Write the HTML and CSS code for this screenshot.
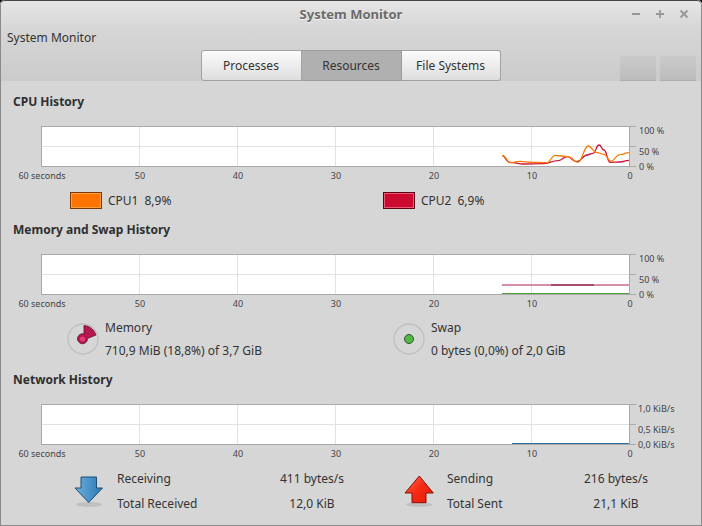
FILE: index.html
```html
<!DOCTYPE html>
<html lang="en">
<head>
<meta charset="utf-8">
<title>System Monitor</title>
<link rel="stylesheet" href="styles.css">
</head>
<body>
<div class="window">
  <header class="chrome">
    <div class="titlebar">
      <span class="wintitle">System Monitor</span>
      <div class="winbtns">
        <svg class="winbtn" viewBox="0 0 10 10"><path d="M1 5h8"/></svg>
        <svg class="winbtn" viewBox="0 0 10 10"><path d="M1 5h8M5 1v8"/></svg>
        <svg class="winbtn" viewBox="0 0 10 10"><path d="M1.5 1.5l7 7M8.5 1.5l-7 7"/></svg>
      </div>
    </div>
    <div class="apptitle">System Monitor</div>
    <div class="toolbar">
      <nav class="tabs">
        <span class="tab tab-first">Processes</span>
        <span class="tab tab-active">Resources</span>
        <span class="tab tab-last">File Systems</span>
      </nav>
      <div class="ghosts"><span class="ghost"></span><span class="ghost"></span></div>
    </div>
  </header>

  <main class="content">
    <h2 class="section-title">CPU History</h2>
    <svg class="chart" viewBox="0 122 702 62" width="702" height="62">
      <rect class="plot" x="41.5" y="126.5" width="588" height="40"/>
      <path class="grid" d="M42 146.5H629M139.5 127V166M237.5 127V166M335.5 127V166M433.5 127V166M531.5 127V166"/>
      <path class="tick" d="M630 126.5h6M630 146.5h6M630 166.5h6"/>
      <path class="line cpu2" d="M502 155.3C505 155.3 506 162.3 510 162.3C515 162.3 518 164 523 164C530 164 535 163.7 543 163.7C549 163.7 552 160.7 558 160.7C562 160.7 563 156.7 567 156.7C571 156.7 573 161.7 577 161.7C581 161.7 583 155 587 155C590 155 590 153.3 593 153.3C596 153.3 596 145 599 145C602 145 601 150 604 150C607 150 607 162.3 610 162.3C614 162.3 616 162 620 162C624 162 625 160.3 629 160.3"/>
      <path class="line cpu1" d="M502 155.3C503 155.3 504 156 505 157C507 159 508 162.7 510 162.7C513 162.7 516 161.3 520 161.3C525 161.3 528 162.3 533 162.3C538 162.3 542 162.7 547 162.7C550 162.7 552 155.3 555 155.3C560 155.3 563 156.7 568 156.7C572 156.7 574 162.3 578 162.3C582 162.3 584 146 588 146C592 146 593 152.7 597 152.7C600 152.7 601 154.3 604 154.3C607 154.3 608 161.3 611 161.3C614 161.3 616 154.7 620 154.7C624 154.7 625 152.7 629 152.7"/>
      <text class="ylab" x="639" y="134">100 %</text>
      <text class="ylab" x="639" y="154.500">50 %</text>
      <text class="ylab" x="639" y="170">0 %</text>
      <text class="xlab" x="42" y="179">60 seconds</text>
      <text class="xlab" x="140" y="179">50</text>
      <text class="xlab" x="238" y="179">40</text>
      <text class="xlab" x="336" y="179">30</text>
      <text class="xlab" x="434" y="179">20</text>
      <text class="xlab" x="532" y="179">10</text>
      <text class="xlab" x="630" y="179">0</text>
    </svg>
    <div class="cpu-legend">
      <div class="cpu-item"><span class="swatch swatch-orange"></span><span>CPU1</span><span>8,9%</span></div>
      <div class="cpu-item"><span class="swatch swatch-red"></span><span>CPU2</span><span>6,9%</span></div>
    </div>

    <h2 class="section-title">Memory and Swap History</h2>
    <svg class="chart" viewBox="0 250 702 62" width="702" height="62">
      <rect class="plot" x="41.5" y="254.5" width="588" height="40"/>
      <path class="grid" d="M42 274.500H629M139.5 255V294M237.5 255V294M335.5 255V294M433.5 255V294M531.5 255V294"/>
      <path class="tick" d="M630 254.5h6M630 274.500h6M630 294.5h6"/>
      <path class="line1 mem-light" d="M502 285H551M594 285H629"/>
      <path class="line1 mem-dark" d="M551 285H594"/>
      <path class="line1 swap" d="M502 293.500H629"/>
      <text class="ylab" x="639" y="262">100 %</text>
      <text class="ylab" x="639" y="282.500">50 %</text>
      <text class="ylab" x="639" y="298">0 %</text>
      <text class="xlab" x="42" y="307">60 seconds</text>
      <text class="xlab" x="140" y="307">50</text>
      <text class="xlab" x="238" y="307">40</text>
      <text class="xlab" x="336" y="307">30</text>
      <text class="xlab" x="434" y="307">20</text>
      <text class="xlab" x="532" y="307">10</text>
      <text class="xlab" x="630" y="307">0</text>
    </svg>
    <div class="mem-legend">
      <div class="mem-item">
        <svg class="dial" viewBox="0 0 32 32">
          <circle class="ring" cx="16" cy="16" r="15"/>
          <path class="wedge" d="M17 2.500A13.500 13.500 0 0 1 29 12L20.500 15.500A5 5 0 1 1 17 11Z"/>
          <circle class="hub" cx="15.500" cy="16" r="2.500"/>
        </svg>
        <div class="mem-text"><span>Memory</span><span>710,9 MiB (18,8%) of 3,7 GiB</span></div>
      </div>
      <div class="mem-item">
        <svg class="dial" viewBox="0 0 32 32">
          <circle class="ring" cx="16" cy="16" r="15"/>
          <circle class="dot" cx="16" cy="16" r="4.500"/>
        </svg>
        <div class="mem-text"><span>Swap</span><span>0 bytes (0,0%) of 2,0 GiB</span></div>
      </div>
    </div>

    <h2 class="section-title">Network History</h2>
    <svg class="chart" viewBox="0 400 702 62" width="702" height="62">
      <rect class="plot" x="41.5" y="404.5" width="588" height="40"/>
      <path class="grid" d="M42 424.500H629M139.5 405V444M237.5 405V444M335.5 405V444M433.5 405V444M531.5 405V444"/>
      <path class="tick" d="M630 404.5h6M630 424.500h6M630 444.5h6"/>
      <path class="line1 net" d="M512 443.500H629"/>
      <text class="ylab" x="638" y="412">1,0 KiB/s</text>
      <text class="ylab" x="638" y="432.500">0,5 KiB/s</text>
      <text class="ylab" x="638" y="448">0,0 KiB/s</text>
      <text class="xlab" x="42" y="457">60 seconds</text>
      <text class="xlab" x="140" y="457">50</text>
      <text class="xlab" x="238" y="457">40</text>
      <text class="xlab" x="336" y="457">30</text>
      <text class="xlab" x="434" y="457">20</text>
      <text class="xlab" x="532" y="457">10</text>
      <text class="xlab" x="630" y="457">0</text>
    </svg>
    <div class="net-legend">
      <div class="net-item">
        <svg class="arrow" viewBox="74 474 32 34">
          <defs>
            <linearGradient id="blue" x1="0" y1="0" x2="1" y2="0"><stop offset="0" stop-color="#6fb0dc"/><stop offset="1" stop-color="#2a78b4"/></linearGradient>
            <linearGradient id="redg" x1="0" y1="0" x2="1" y2="1"><stop offset="0" stop-color="#ff6a50"/><stop offset=".5" stop-color="#f42a12"/><stop offset="1" stop-color="#e81a06"/></linearGradient>
          </defs>
          <ellipse class="shadow" cx="89" cy="504.500" rx="13" ry="2.500"/>
          <path class="arrow-down" d="M81 477H96.500V488H102.500L88.700 502.500L75 488H81Z"/>
        </svg>
        <div class="net-grid net-grid-in">
          <span>Receiving</span><span class="net-val">411 bytes/s</span>
          <span>Total Received</span><span class="net-val">12,0 KiB</span>
        </div>
      </div>
      <div class="net-item">
        <svg class="arrow" viewBox="404 474 32 34">
          <ellipse class="shadow" cx="419" cy="504.500" rx="13" ry="2.500"/>
          <path class="arrow-up" d="M419.300 476L433.300 493H426V502.700H412V493H405Z"/>
        </svg>
        <div class="net-grid net-grid-out">
          <span>Sending</span><span class="net-val">216 bytes/s</span>
          <span>Total Sent</span><span class="net-val">21,1 KiB</span>
        </div>
      </div>
    </div>
  </main>
</div>
</body>
</html>
```
FILE: styles.css
```css
html, body { margin: 0; padding: 0; background: #111; }
body { width: 702px; height: 526px; overflow: hidden; font-family: "Noto Sans", sans-serif; font-size: 12px; color: #333; }
.window { position: relative; width: 702px; height: 526px; background: #d6d6d6; border-radius: 5px 5px 0 0; overflow: hidden; display: flex; flex-direction: column; }
.window::after { content: ""; position: absolute; inset: 0; border: 1px solid #8a8a8a; border-top-color: #444; border-radius: 5px 5px 0 0; pointer-events: none; }

.chrome { height: 81px; flex: none; background: linear-gradient(#e6e6e6, #d6d6d6 35%, #cbcbcb); display: flex; flex-direction: column; }
.titlebar { height: 28px; flex: none; display: flex; align-items: center; justify-content: center; position: relative; }
.wintitle { font-size: 13px; font-weight: 700; color: #6a6a6a; text-shadow: 0 1px 0 #f4f4f4; }
.winbtns { position: absolute; right: 13px; top: 9px; display: flex; gap: 14px; }
.winbtn { width: 10px; height: 10px; fill: none; stroke: #979797; stroke-width: 1.800; }
.apptitle { height: 18px; line-height: 18px; padding-left: 7px; flex: none; margin: 1px 0 3px; color: #333; }
.toolbar { position: relative; display: flex; justify-content: center; height: 31px; }
.tabs { display: flex; margin-right: 1px; }
.tab { display: flex; align-items: center; justify-content: center; width: 100px; height: 31px; box-sizing: border-box; border: 1px solid #a2a2a2; border-left-width: 0; background: linear-gradient(#fbfbfb, #dedede); color: #333; }
.tab-first { width: 101px; border-left-width: 1px; border-radius: 3px 0 0 3px; }
.tab-active { background: #b0b0b0; border-color: #9c9c9c; }
.tab-last { width: 99px; border-radius: 0 3px 3px 0; }
.ghosts { position: absolute; right: 6px; bottom: 0; display: flex; gap: 4px; }
.ghost { width: 36px; height: 25px; background: linear-gradient(#cacaca, #bcbcbc); border-bottom: 1px solid #aeaeae; box-sizing: border-box; }

.content { flex: 1; display: flex; flex-direction: column; }
.section-title { margin: 13px 0 12px; padding-left: 13px; font-size: 12px; line-height: 16px; font-weight: 700; color: #2f2f2f; }
.chart { display: block; flex: none; }
.plot { fill: #fff; stroke: #a9a9a9; }
.grid { fill: none; stroke: #e2e2e2; }
.tick { fill: none; stroke: #a9a9a9; }
.line { fill: none; stroke-width: 1.300; }
.line1 { fill: none; stroke-width: 1; }
.cpu1 { stroke: #ff7a00; }
.cpu2 { stroke: #c9103c; }
.mem-light { stroke: #c86a8a; stroke-width: 1.500; }
.mem-dark { stroke: #8a1038; stroke-width: 1.500; }
.swap { stroke: #4ea03c; }
.net { stroke: #2a6f98; }
.ylab { font-size: 9px; fill: #444; }
.xlab { font-size: 9px; fill: #444; text-anchor: middle; }

.cpu-legend { display: grid; grid-template-columns: 313px 1fr; margin-top: 8px; padding-left: 70px; height: 17px; }
.cpu-item { display: flex; align-items: flex-start; gap: 6px; line-height: 18px; }
.swatch { width: 32px; height: 17px; box-sizing: border-box; border: 1px solid; }
.swatch-orange { background: #ff7400; border-color: #7a3800; box-shadow: inset 0 0 0 1px #ffa040; }
.swatch-red { background: #cc0a30; border-color: #5e0014; box-shadow: inset 0 0 0 1px #e85a78; }

.mem-legend { display: grid; grid-template-columns: 326px 1fr; padding-left: 67px; margin-top: 7px; height: 40px; }
.mem-item { display: flex; gap: 5px; }
.dial { width: 32px; height: 32px; margin-top: 4px; flex: none; }
.ring { fill: #d6d6d6; stroke: #c0c0c0; stroke-width: 1.400; }
.wedge { fill: #b8164f; stroke: #5c1030; stroke-width: .8; }
.hub { fill: #e0407a; }
.dot { fill: #54b644; stroke: #2d5a2a; }
.mem-text { display: flex; flex-direction: column; gap: 6px; line-height: 17px; margin-left: 1px; }
.mem-text span:last-child { white-space: nowrap; }

.net-legend { display: grid; grid-template-columns: 330px 1fr; padding-left: 74px; margin-top: 8px; }
.net-item { display: flex; gap: 11px; }
.arrow { width: 32px; height: 34px; margin-top: 4px; flex: none; }
.shadow { fill: #000; opacity: .1; }
.arrow-down { fill: url(#blue); stroke: #1c4e78; stroke-linejoin: round; }
.arrow-up { fill: url(#redg); stroke: #8a1006; stroke-linejoin: round; }
.net-grid { display: grid; grid-auto-rows: 17px; row-gap: 8px; white-space: nowrap; }
.net-grid-in { grid-template-columns: 149px 92px; }
.net-grid-out { grid-template-columns: 123px 92px; }
.net-val { text-align: center; }
```
